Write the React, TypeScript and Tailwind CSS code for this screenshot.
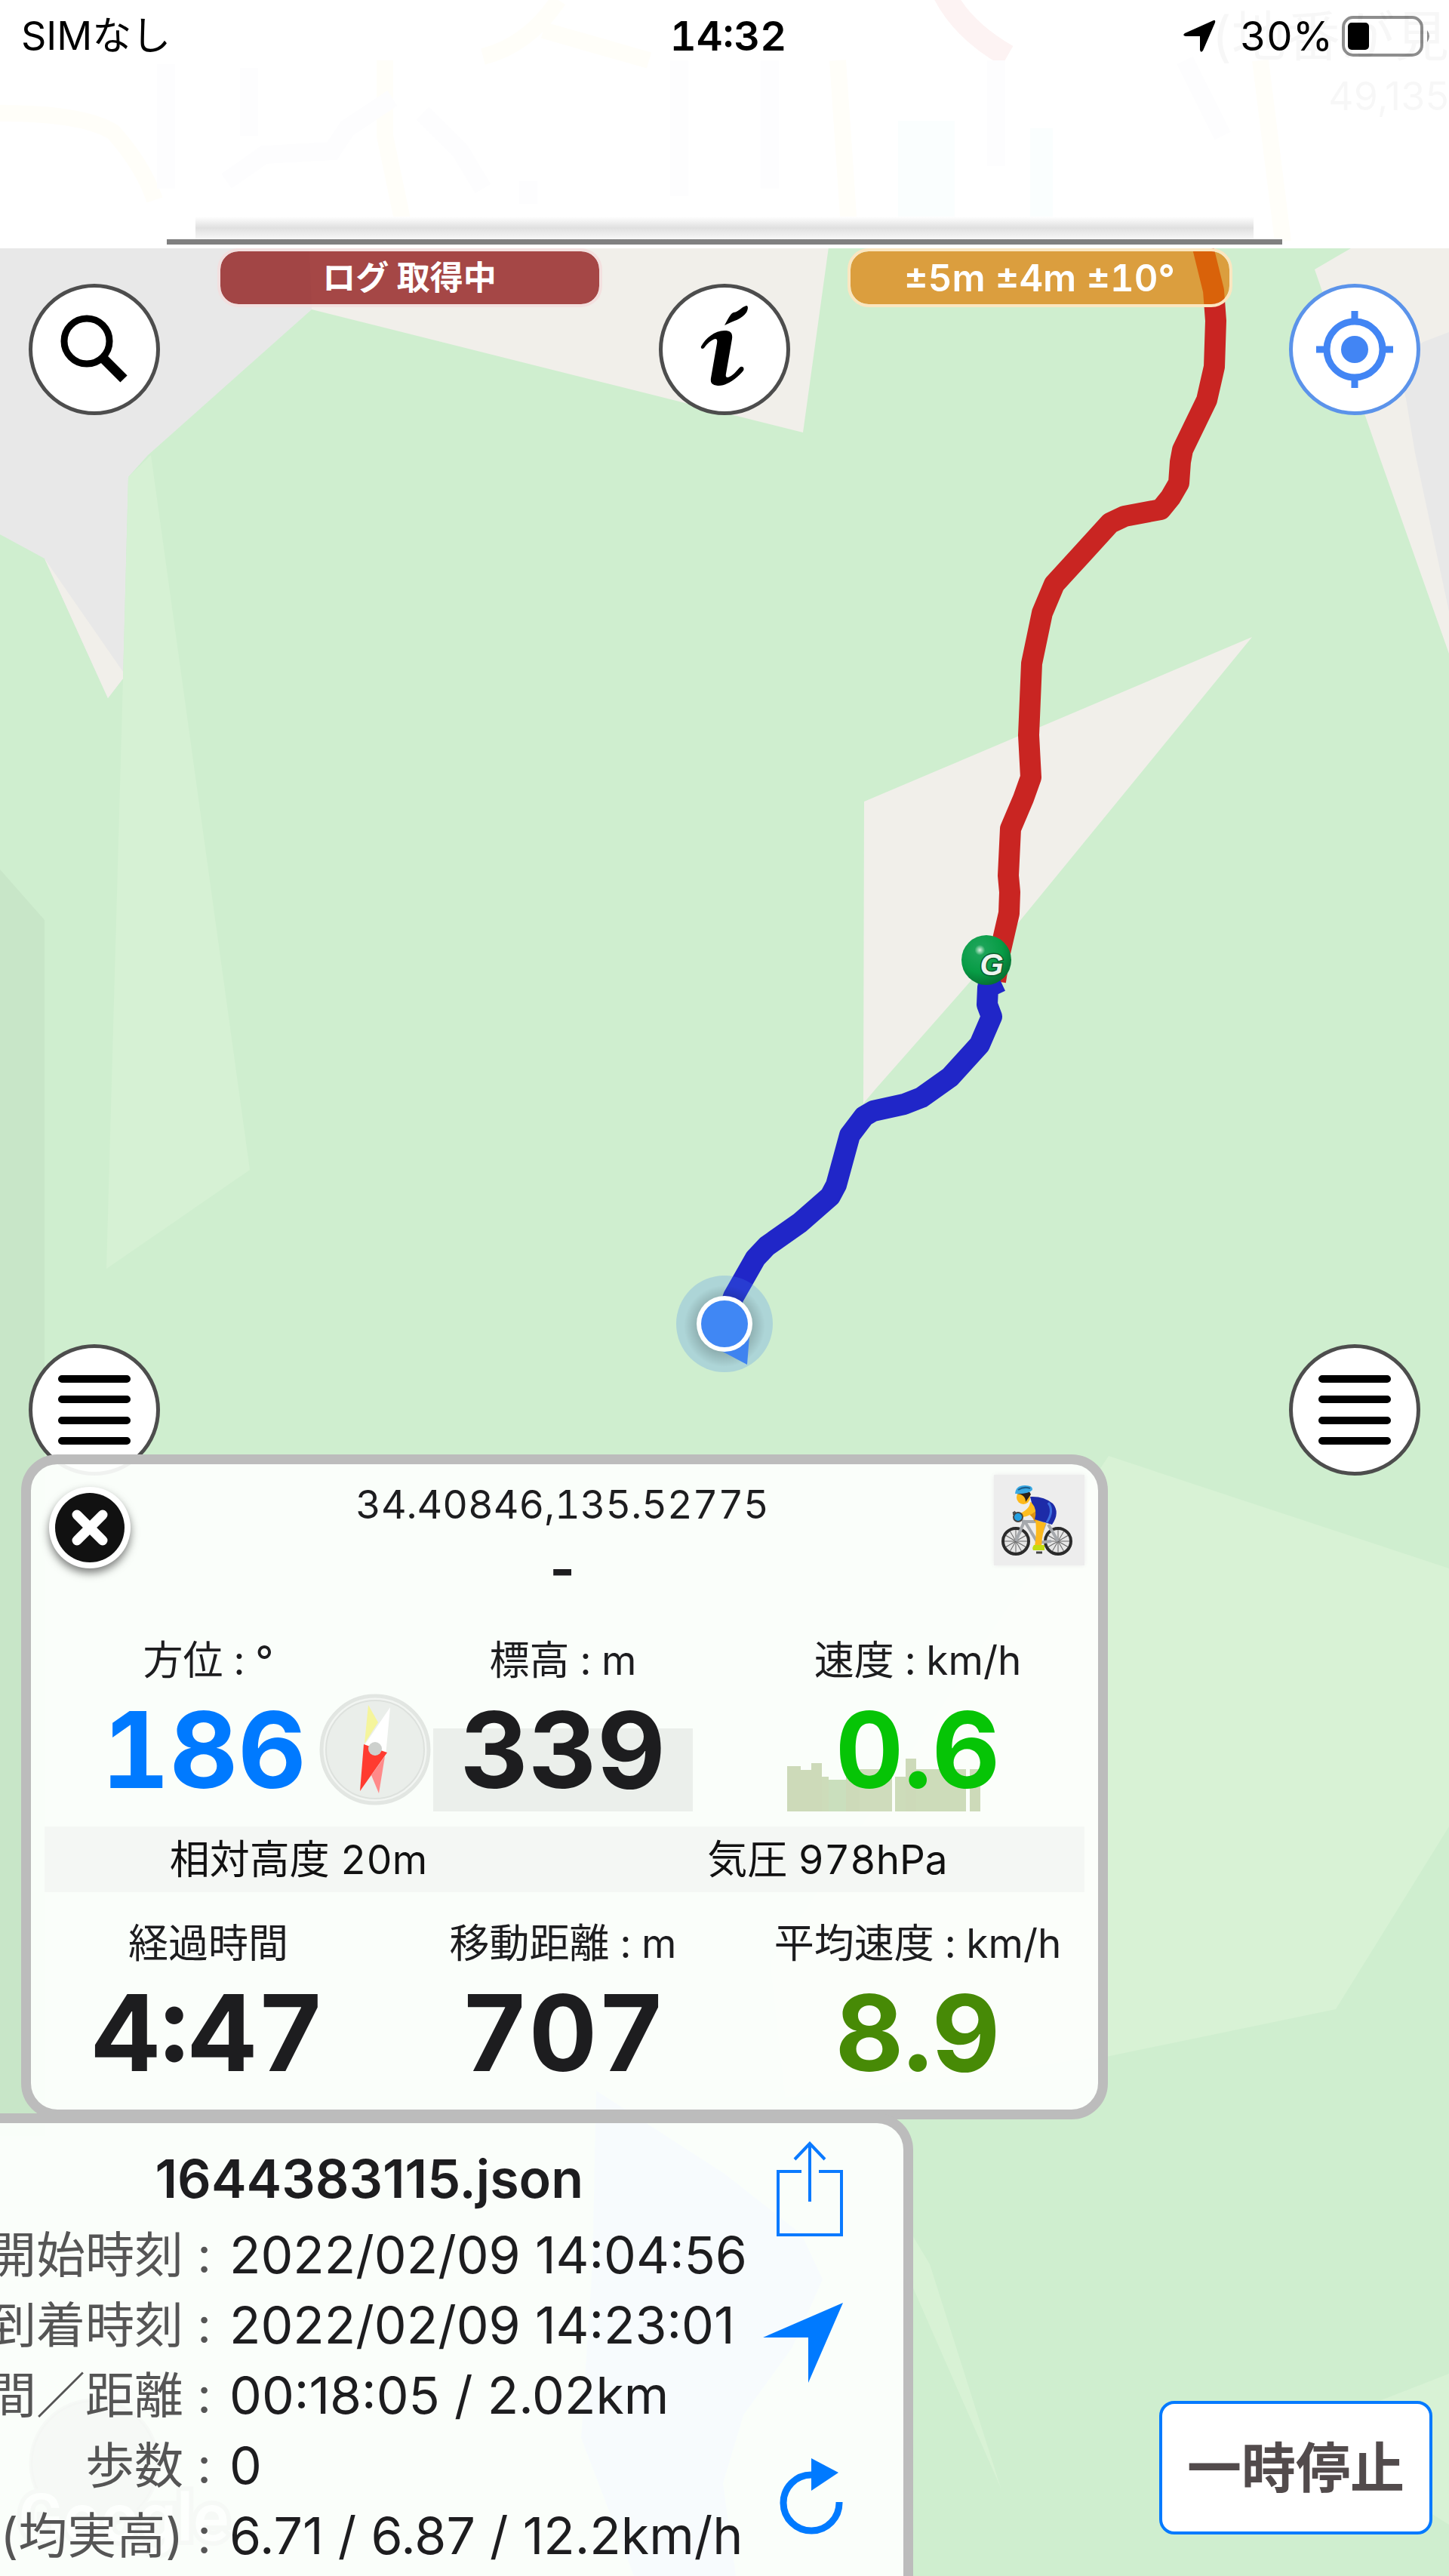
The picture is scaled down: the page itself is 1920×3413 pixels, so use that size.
import type { ReactNode } from "react";

const SPEED_BARS = [
  { w: 18, h: 60, c: "#cddab9" },
  { w: 14, h: 55, c: "#cddab9" },
  { w: 14, h: 64, c: "#cddab9" },
  { w: 9, h: 46, c: "#cddcba" },
  { w: 23, h: 42, c: "#cadfbd" },
  { w: 18, h: 52, c: "#cddab9" },
  { w: 43, h: 56, c: "#cfdcbc" },
  { w: 4, h: 0, c: "#ffffff" },
  { w: 14, h: 46, c: "#cddcba" },
  { w: 14, h: 70, c: "#cddab9" },
  { w: 66, h: 56, c: "#cddcba" },
  { w: 5, h: 0, c: "#ffffff" },
  { w: 14, h: 56, c: "#cddab9" },
];

const LOG_ROWS = [
  { label: "開始時刻 :", value: "2022/02/09 14:04:56" },
  { label: "到着時刻 :", value: "2022/02/09 14:23:01" },
  { label: "時間／距離 :", value: "00:18:05 / 2.02km" },
  { label: "歩数 :", value: "0" },
  { label: "(均実高) :", value: "6.71 / 6.87 / 12.2km/h" },
];

function MapCanvas() {
  return (
    <svg
      className="absolute inset-0 h-full w-full"
      viewBox="0 0 1920 3413"
      preserveAspectRatio="xMidYMin slice"
      aria-hidden="true"
    >
      <defs>
        <radialGradient id="ball" cx="0.37" cy="0.3" r="0.75">
          <stop offset="0" stopColor="#d8f2e0" />
          <stop offset="0.14" stopColor="#1ba458" />
          <stop offset="0.6" stopColor="#079c45" />
          <stop offset="1" stopColor="#066d30" />
        </radialGradient>
        <radialGradient id="dotShadow">
          <stop offset="0.6" stopColor="#000" stopOpacity="0.2" />
          <stop offset="1" stopColor="#000" stopOpacity="0" />
        </radialGradient>
      </defs>
      <rect width="1920" height="3413" fill="#cfeecf" />
      <polygon points="0,320 560,320 413,410 196,603 170,632 163,899 143,925 59,740 0,708" fill="#e8e8e8" />
      <polygon points="59,740 163,890 163,899 143,925" fill="#f1efea" />
      <polygon points="410,320 1099,320 1064,573 413,410" fill="#f1efea" />
      <polygon points="1800,320 1920,320 1920,866 1826,600 1742,357 1790,329" fill="#f1efea" />
      <polygon points="1920,440 1886,453 1850,480 1863,528 1875,600 1920,810" fill="#e8e8e8" />
      <polygon points="200,603 331,1550 141,1681 163,899 170,632" fill="#d6f1d4" />
      <polygon points="0,1152 59,1219 59,2830 0,2830" fill="#c8e6c8" />
      <polygon points="1659,844 1145,1062 1144,1462 1160,1443 1286,1300" fill="#f1efea" />
      <polygon points="1469,1929 1920,2078 1920,2420 1770,2662 1466,2725 1040,2780 1020,2600" fill="#d8f2d5" />
      <polygon points="1205,2955 1232,3000 1326,3296 1205,3020" fill="#d8f2d5" />
      <polygon points="1820,3184 1920,3145 1920,3345 1880,3320" fill="#d8f2d5" />
      <polygon points="790,2770 960,2880 1062,2960 1090,3020 1050,3110 985,3200 958,3290 975,3413 840,3413 770,3230 785,3000" fill="#a9caff" />
      <circle cx="125" cy="3264" r="84" fill="#8a8a8a" fillOpacity="0.7" stroke="#666" strokeOpacity="0.5" strokeWidth="5" />
      <text x="24" y="3366" fontFamily="Roboto" fontSize="88" fontWeight="500" fill="#fff" stroke="#a0a8a0" strokeWidth="12" paintOrder="stroke">
        Google
      </text>
      <polyline
        points="1592,320 1608,385 1611,425 1609,486 1599,530 1567,596 1564,612 1562,640 1551,659 1538,675 1490,684 1471,693 1430,738 1397,774 1381,812 1367,879 1363,974 1366,1030 1356,1058 1339,1098 1336,1160 1338,1182 1337,1210 1325,1262 1319,1300"
        fill="none"
        stroke="#c92522"
        strokeWidth="28"
        strokeLinejoin="round"
      />
      <polyline
        points="1326,1300 1309,1308 1308,1331 1314,1347 1298,1384 1259,1427 1221,1454 1198,1463 1157,1472 1145,1479 1126,1504 1108,1570 1100,1585 1060,1620 1016,1651 1001,1667 972,1718 960,1753"
        fill="none"
        stroke="#2026c8"
        strokeWidth="28"
        strokeLinejoin="round"
      />
      <circle cx="960" cy="1754" r="64" fill="#4285f4" fillOpacity="0.24" />
      <circle cx="960" cy="1757" r="54" fill="url(#dotShadow)" />
      <polygon points="993,1770 990,1808 956,1790" fill="#3f83f0" />
      <circle cx="960" cy="1754" r="37" fill="#fff" />
      <circle cx="960" cy="1754" r="31" fill="#4087f4" />
      <circle cx="1307" cy="1272" r="33" fill="url(#ball)" />
      <text x="1314" y="1292" textAnchor="middle" fontFamily="Liberation Sans" fontSize="40" fontWeight="700" fontStyle="italic" fill="#eef4ef" stroke="#0b5a2b" strokeWidth="3" paintOrder="stroke">
        G
      </text>
    </svg>
  );
}

function RoundButton({ label, blue, children }: { label: string; blue?: boolean; children: ReactNode }) {
  return (
    <button
      type="button"
      aria-label={label}
      className={
        "flex size-[174px] shrink-0 items-center justify-center rounded-full border-[5px] bg-white " +
        (blue ? "border-[#5b93ea]" : "border-[#4d4d4d]")
      }
    >
      {children}
    </button>
  );
}

function MenuIcon() {
  return (
    <svg width="98" height="94" viewBox="0 0 98 94" stroke="#000" strokeWidth="10" strokeLinecap="round">
      <path d="M6 6H92M6 33H92M6 61H92M6 88H92" />
    </svg>
  );
}

function SearchIcon() {
  return (
    <svg width="96" height="96" viewBox="0 0 96 96" fill="none" stroke="#000">
      <circle cx="38" cy="37" r="30" strokeWidth="9" />
      <path d="M59 59L87 87" strokeWidth="13" />
    </svg>
  );
}

function InfoIcon() {
  return (
    <svg className="mb-2" width="64" height="108" viewBox="0 0 64 108">
      <path d="M32 26C36 19 40 10 44 9C51 8 54 2 61 0C64 0 63 6 61 9C55 18 44 20 32 26Z" />
      <path d="M1 54C7 43 19 33 32 33C40 33 43 36 42 44L34 90C33 95 35 96 39 94C45 91 49 85 52 82C55 79 59 82 57 86C50 95 35 107 23 106C16 105 13 103 14 96L22 50C23 44 21 43 17 45C11 48 8 52 5 56C3 58 0 57 1 54Z" />
    </svg>
  );
}

function TargetIcon() {
  return (
    <svg width="102" height="102" viewBox="0 0 102 102" fill="none" stroke="#4285f4" strokeWidth="9">
      <circle cx="51" cy="51" r="37" />
      <path d="M51 0V14M51 88V102M0 51H14M88 51H102" />
      <circle cx="51" cy="51" r="18" fill="#4285f4" stroke="none" />
    </svg>
  );
}

function Spokes({ cx }: { cx: number }) {
  return (
    <g>
      <circle cx={cx} cy="88" r="17" fill="#e6e6e6" stroke="#2b2b2b" strokeWidth="4" />
      {[0, 30, 60, 90, 120, 150].map((a) => (
        <path key={a} d={`M${cx - 15} 88H${cx + 15}`} transform={`rotate(${a} ${cx} 88)`} stroke="#666" strokeWidth="1" />
      ))}
    </g>
  );
}

function CyclistIcon() {
  return (
    <svg width="120" height="120" viewBox="0 0 120 120" fill="none">
      <Spokes cx={29} />
      <Spokes cx={85} />
      <path d="M29 88L41 60M41 62L58 90L76 88M37 62H66M58 90L68 64M72 66L85 88" stroke="#a5a8ac" strokeWidth="4" />
      <path d="M52 47Q60 48 60 60L54 62Q50 54 46 52Z" fill="#dd9214" />
      <path d="M48 36Q48 46 31 53L34 57Q54 54 61 41Z" fill="#fdbd20" />
      <path d="M55 60L69 64Q64 76 63 95H54Q57 76 55 60Z" fill="#fcb81c" />
      <path d="M48 29Q66 28 78 38Q88 50 77 66L54 59Q58 46 50 37Z" fill="#1d2ba8" />
      <path d="M72 37Q80 48 70 63" stroke="#3d6fe0" strokeWidth="3" />
      <ellipse cx="39" cy="30" rx="9" ry="9" fill="#fdb91b" />
      <path d="M30 21Q46 17 49 26L42 36Q42 26 30 25Z" fill="#2a211b" />
      <path d="M28 25Q29 14 41 14Q52 14 51 20Q46 26 28 25Z" fill="#3aa9e3" />
      <path d="M32 20Q40 15 48 18" stroke="#1b5f8e" strokeWidth="2" />
      <path d="M26 49L31 56M27 49L27 53" stroke="#555" strokeWidth="4" />
      <circle cx="32" cy="56" r="6" fill="#24a0e2" stroke="#444" strokeWidth="2" />
      <path d="M53 93H67V100H52Q50 97 53 93Z" fill="#c3dc12" />
      <path d="M56 103H64" stroke="#444" strokeWidth="3" />
    </svg>
  );
}

function Compass() {
  return (
    <svg width="148" height="148" viewBox="0 0 148 148">
      <circle cx="74" cy="74" r="71" fill="#f2f5f2" stroke="#e2e6e2" strokeWidth="5" />
      <circle cx="74" cy="74" r="65" fill="#eaeeea" stroke="#dde1dd" strokeWidth="2" />
      <polygon points="65,15 78,38 60,66" fill="#f5f59c" />
      <polygon points="94,18 88,82 60,68" fill="#fff" />
      <polygon points="87,83 79,132 69,108" fill="#ff8a8a" />
      <polygon points="59,67 90,78 54,129" fill="#ff3b30" />
      <circle cx="74" cy="73" r="9" fill="#cdd0cd" />
    </svg>
  );
}

function Header() {
  return (
    <header className="relative flex h-[329px] flex-col overflow-hidden bg-white">
      <svg className="absolute inset-0 h-full w-full" viewBox="0 0 1920 329" preserveAspectRatio="xMidYMin slice" fill="none" aria-hidden="true">
        <path d="M1250 -10Q1275 40 1335 74" stroke="#fdf3f3" strokeWidth="30" />
        <path d="M0 150Q110 150 150 175Q190 220 205 265M640 75Q700 60 740 0M720 40L860 80M510 80V180L535 300M1110 80L1125 300M1670 80L1700 320" stroke="#fffef9" strokeWidth="22" />
        <path d="M220 85V250M330 90V180M300 240L350 205L440 200L460 170L520 130M560 150L610 200L640 250M700 240V270M900 80V260M1020 80V250M1320 80V220M1570 80L1620 180" stroke="#fdfdfe" strokeWidth="24" />
        <path d="M1190 160H1265V298H1190ZM1365 170H1395V298H1365Z" fill="#fafefe" />
      </svg>
      <div className="relative grid h-24 grid-cols-3 items-center pr-[22px] pl-7 text-[54px] leading-none text-black">
        <span className="text-[52px]">SIMなし</span>
        <span className="pl-1 text-center font-semibold tabular-nums">14:32</span>
        <span className="flex items-center justify-end gap-3">
          <svg className="mr-5" width="44" height="44" viewBox="0 0 44 44" aria-hidden="true">
            <path d="M41 1Q44 0 43 4L27 41Q24 45 23 40V22H4Q-1 21 3 18Z" />
          </svg>
          <span className="tabular-nums">30%</span>
          <svg width="120" height="54" viewBox="0 0 120 54" fill="none" aria-hidden="true">
            <rect x="2" y="2" width="104" height="50" rx="13" stroke="#8e8e8e" strokeWidth="4" />
            <rect x="8" y="9" width="28" height="36" rx="5" fill="#000" />
            <path d="M113 19Q119 27 113 35Z" fill="#8e8e8e" />
          </svg>
        </span>
        <span className="absolute top-3 right-0 text-[72px] whitespace-nowrap text-[#00000008]" aria-hidden="true">
          (地番が見
        </span>
        <span className="absolute top-[102px] right-0 text-[52px] whitespace-nowrap text-[#00000008]" aria-hidden="true">
          49,135
        </span>
      </div>
      <div className="relative mt-auto mb-[5px] flex flex-col items-center">
        <div className="h-[30px] w-[73%] bg-linear-to-b from-white via-[#e0e0e0] to-[#f8f8f8]" />
        <div className="h-[7px] w-[77%] bg-[#808080]" />
      </div>
    </header>
  );
}

function Metric({ label, children }: { label: string; children: ReactNode }) {
  return (
    <div className="flex flex-1 flex-col items-center">
      <div className="text-[53px] leading-[72px] whitespace-nowrap">{label}</div>
      {children}
    </div>
  );
}

function StatusPanel() {
  return (
    <section className="relative ml-7 w-[75%] rounded-[48px] border-[13px] border-[#bcbcbc] bg-[#fdfffd]/93 pb-8 text-[#1d1d1f]">
      <div className="grid grid-cols-[1fr_auto_1fr] items-start pt-[14px] pr-[18px] pl-6">
        <button type="button" aria-label="閉じる" className="mt-4 flex size-[108px] items-center justify-center rounded-full bg-white shadow-[0_6px_12px_rgba(0,0,0,0.5)]">
          <svg width="92" height="92" viewBox="0 0 92 92">
            <circle cx="46" cy="46" r="46" fill="#111" />
            <path d="M29 29L63 63M63 29L29 63" stroke="#fff" strokeWidth="13" strokeLinecap="round" />
          </svg>
        </button>
        <div className="pr-3 text-center">
          <div className="pt-1 text-[52px] leading-[72px] tabular-nums">34.40846,135.52775</div>
          <div className="text-[72px] leading-[98px] font-bold">-</div>
        </div>
        <button type="button" aria-label="自転車" className="size-[120px] justify-self-end bg-[#ededed] shadow-[0_0_6px_#ededed]">
          <CyclistIcon />
        </button>
      </div>
      <div className="mt-9 flex pr-1 tabular-nums">
        <Metric label="方位 : °">
          <div className="relative flex h-[164px] w-full items-center justify-center">
            <span className="pr-3 text-[140px] leading-none font-bold text-[#007aff]">186</span>
            <span className="absolute top-[8px] -right-[60px]">
              <Compass />
            </span>
          </div>
        </Metric>
        <Metric label="標高 : m">
          <div className="relative flex h-[164px] w-full items-center justify-center">
            <span className="absolute bottom-0 h-[110px] w-[344px] bg-[#ebefeb]" />
            <span className="relative text-[140px] leading-none font-bold">339</span>
          </div>
        </Metric>
        <Metric label="速度 : km/h">
          <div className="relative flex h-[164px] w-full items-center justify-center">
            <span className="absolute bottom-0 left-[62px] flex items-end">
              {SPEED_BARS.map((b, i) => (
                <span key={i} style={{ width: b.w, height: b.h, backgroundColor: b.c }} />
              ))}
            </span>
            <span className="relative text-[140px] leading-none font-bold text-[#06c406]">0.6</span>
          </div>
        </Metric>
      </div>
      <div className="mx-[18px] mt-5 flex h-[87px] items-center bg-[#f4f7f4] text-[53px] leading-[72px] text-[#111] tabular-nums">
        <span className="flex-1 pr-7 text-center">相対高度 20m</span>
        <span className="flex-1 pr-1 text-center">気圧 978hPa</span>
      </div>
      <div className="mt-8 flex pr-1 tabular-nums">
        <Metric label="経過時間">
          <div className="mt-3 text-[140px] leading-none font-bold">4:47</div>
        </Metric>
        <Metric label="移動距離 : m">
          <div className="mt-3 text-[140px] leading-none font-bold">707</div>
        </Metric>
        <Metric label="平均速度 : km/h">
          <div className="mt-3 text-[140px] leading-none font-bold text-[#478a06]">8.9</div>
        </Metric>
      </div>
    </section>
  );
}

function LogPanel() {
  return (
    <section className="relative -mt-2 flex w-[63%] self-stretch overflow-hidden rounded-tr-[48px] border-t-[13px] border-r-[13px] border-[#bcbcbc] bg-[#fdfffd]/93">
      <div className="min-w-0 flex-1 pt-6">
        <h2 className="pr-8 text-center text-[70px] leading-[100px] font-semibold text-[#1d1d1f]">1644383115.json</h2>
        <dl className="mt-1 text-[68px] leading-[93px]">
          {LOG_ROWS.map((r) => (
            <div key={r.label} className="flex gap-6 whitespace-nowrap">
              <dt className="flex w-[280px] shrink-0 justify-end text-[65px] text-[#555]">{r.label}</dt>
              <dd className="text-[#1d1d1f]">{r.value}</dd>
            </div>
          ))}
        </dl>
      </div>
      <div className="mr-20 flex w-[106px] shrink-0 flex-col items-end pt-6">
        <button type="button" aria-label="共有">
          <svg width="88" height="126" viewBox="0 0 88 126" fill="none" stroke="#0a7aff" strokeWidth="4">
            <path d="M33 40H2V124H86V40H56M44 80V3M24 24L44 3L64 24" />
          </svg>
        </button>
        <button type="button" aria-label="ナビ" className="mt-[88px]">
          <svg width="106" height="106" viewBox="0 0 106 106" fill="#007aff">
            <path d="M106 0L60 106V46H0Z" />
          </svg>
        </button>
        <button type="button" aria-label="更新" className="mt-[100px]">
          <svg width="84" height="102" viewBox="0 0 84 102" fill="none" stroke="#007aff" strokeWidth="9">
            <path d="M42 22A37 37 0 1 0 79 58" />
            <path d="M42 0L78 19L42 43Z" fill="#007aff" stroke="none" />
          </svg>
        </button>
      </div>
    </section>
  );
}

export default function App() {
  return (
    <main
      lang="ja"
      className="relative flex min-h-screen flex-col overflow-hidden bg-[#cfeecf] font-['Inter','Noto_Sans_CJK_JP',sans-serif]"
    >
      <MapCanvas />
      <Header />
      <div className="relative flex items-start justify-between px-[38px]">
        <div className="mt-[47px] flex">
          <RoundButton label="検索">
            <SearchIcon />
          </RoundButton>
        </div>
        <div className="flex h-[78px] w-[510px] items-center justify-center rounded-[28px] border-4 border-[#f4dcdc]/80 bg-[#850000]/70 bg-clip-padding text-[44px] leading-none font-bold text-white">
          ログ 取得中
        </div>
        <div className="mt-[47px] flex">
          <RoundButton label="情報">
            <InfoIcon />
          </RoundButton>
        </div>
        <div className="flex h-[78px] w-[510px] items-center justify-center rounded-[28px] border-4 border-[#fbe6c0] bg-[#e17d00]/70 bg-clip-padding text-[49px] leading-none font-semibold text-white tabular-nums">
          ±5m ±4m ±10°
        </div>
        <div className="mt-[47px] flex">
          <RoundButton label="現在地" blue>
            <TargetIcon />
          </RoundButton>
        </div>
      </div>
      <div className="flex-1" />
      <div className="relative -mb-[28px] flex justify-between px-[38px]">
        <RoundButton label="メニュー左">
          <MenuIcon />
        </RoundButton>
        <RoundButton label="メニュー右">
          <MenuIcon />
        </RoundButton>
      </div>
      <StatusPanel />
      <div className="relative flex h-[605px] items-end justify-between">
        <LogPanel />
        <button
          type="button"
          className="mr-[22px] mb-[55px] h-[177px] w-[362px] rounded-[20px] border-4 border-[#057aff] bg-white text-[72px] leading-none font-bold text-[#524b4c]"
        >
          一時停止
        </button>
      </div>
    </main>
  );
}
